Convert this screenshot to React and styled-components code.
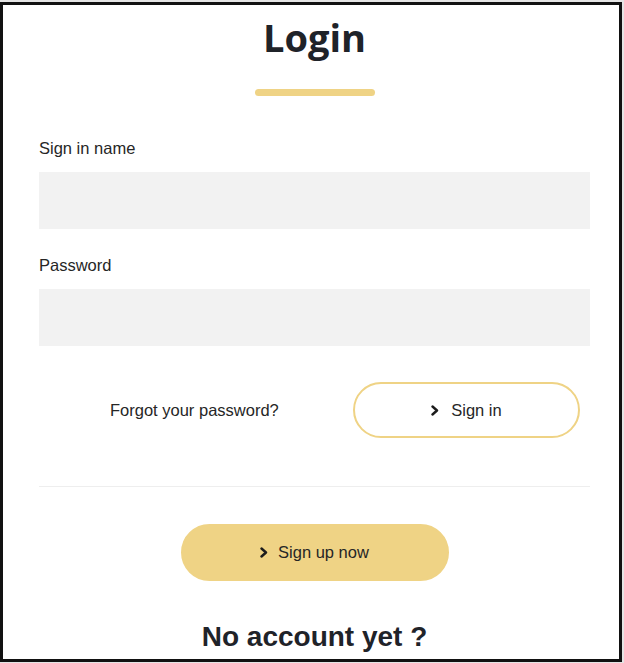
import styled, { createGlobalStyle } from "styled-components";

const colors = {
  ink: "#1f2329",
  text: "#262626",
  yellow: "#efd385",
  field: "#f2f2f2",
  rule: "#eeeeee",
};

const GlobalStyle = createGlobalStyle`
  body {
    margin: 0;
    background: #e4e4e4;
    font-family: "Liberation Sans", Arial, sans-serif;
  }
`;

const Frame = styled.div`
  margin-top: 2px;
  width: 622px;
  height: 660px;
  box-sizing: border-box;
  border: 3px solid #111111;
  background: #ffffff;
  overflow: hidden;
  padding: 0 29px 0 36px;
  display: flex;
  flex-direction: column;
`;

const Title = styled.h1`
  margin: 9px 0 0;
  font-family: "Open Sans", sans-serif;
  font-weight: 700;
  font-size: 38px;
  line-height: 46px;
  color: ${colors.ink};
  text-align: center;
`;

const TitleBar = styled.div`
  align-self: center;
  width: 120px;
  height: 7px;
  margin-top: 29px;
  border-radius: 4px;
  background: ${colors.yellow};
`;

const Field = styled.div`
  display: flex;
  flex-direction: column;
  margin-top: ${({ top }) => top};
`;

const Label = styled.label`
  font-size: 16.5px;
  line-height: 20px;
  color: ${colors.text};
  margin-bottom: 14px;
`;

const Input = styled.input`
  height: 57px;
  border: none;
  outline: none;
  background: ${colors.field};
  padding: 0 14px;
  font: inherit;
  box-sizing: border-box;
`;

const ActionRow = styled.div`
  display: flex;
  align-items: center;
  margin-top: 36px;
  padding-left: 71px;
  padding-right: 10px;
`;

const ForgotLink = styled.a`
  font-size: 16.5px;
  color: ${colors.text};
  text-decoration: none;
  cursor: pointer;
`;

const PillButton = styled.button`
  display: flex;
  align-items: center;
  justify-content: center;
  gap: ${({ gap }) => gap};
  width: ${({ width }) => width};
  height: ${({ height }) => height};
  margin-left: ${({ align }) => (align === "end" ? "auto" : "0")};
  align-self: ${({ align }) => (align === "center" ? "center" : "auto")};
  box-sizing: border-box;
  border-radius: 999px;
  border: 2px solid ${colors.yellow};
  background: ${({ filled }) => (filled ? colors.yellow : "#ffffff")};
  color: ${colors.text};
  font-family: "Liberation Sans", Arial, sans-serif;
  font-size: 16.5px;
  cursor: pointer;
`;

const Divider = styled.hr`
  width: 100%;
  height: 1px;
  margin: 48px 0 0;
  border: none;
  background: ${colors.rule};
`;

const SignUpButton = styled(PillButton)`
  margin-top: 37px;
`;

const Subtitle = styled.h2`
  margin: 40px 0 0;
  font-weight: 700;
  font-size: 28px;
  line-height: 32px;
  color: ${colors.ink};
  text-align: center;
`;

const Chevron = () => (
  <svg width="8" height="11" viewBox="0 0 8 11">
    <polyline
      points="1.5,1.5 6,5.5 1.5,9.5"
      fill="none"
      stroke="#1c1c1c"
      strokeWidth="2.4"
      strokeLinecap="round"
      strokeLinejoin="round"
    />
  </svg>
);

const App = () => (
  <>
    <GlobalStyle />
    <Frame>
      <Title>Login</Title>
      <TitleBar />
      <Field top="42px">
        <Label htmlFor="signInName">Sign in name</Label>
        <Input id="signInName" type="text" />
      </Field>
      <Field top="26px">
        <Label htmlFor="password">Password</Label>
        <Input id="password" type="password" />
      </Field>
      <ActionRow>
        <ForgotLink>Forgot your password?</ForgotLink>
        <PillButton align="end" width="227px" height="56px" gap="12px">
          <Chevron />
          Sign in
        </PillButton>
      </ActionRow>
      <Divider />
      <SignUpButton filled align="center" width="268px" height="57px" gap="10px">
        <Chevron />
        Sign up now
      </SignUpButton>
      <Subtitle>No account yet ?</Subtitle>
    </Frame>
  </>
);

export default App;
